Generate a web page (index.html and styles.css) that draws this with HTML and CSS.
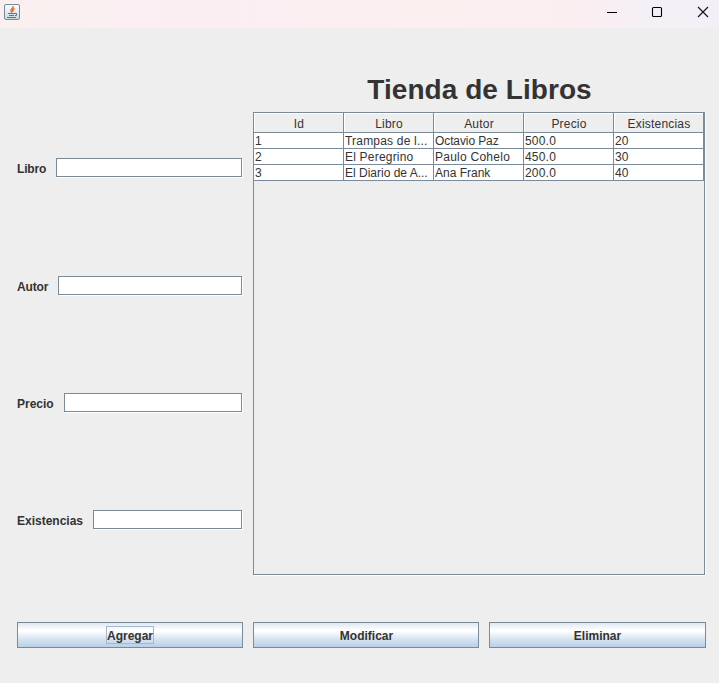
FILE: index.html
```html
<!DOCTYPE html>
<html lang="es">
<head>
<meta charset="utf-8">
<title>Tienda de Libros</title>
<link rel="stylesheet" href="styles.css">
</head>
<body>
<header class="titlebar">
  <svg class="app-icon" width="16" height="16" viewBox="0 0 16 16">
    <defs><linearGradient id="g" x1="0" y1="0" x2="0" y2="1"><stop offset="0" stop-color="#fff"/><stop offset="1" stop-color="#c9d8e2"/></linearGradient></defs>
    <rect x=".5" y=".5" width="15" height="15" rx="1.500" fill="url(#g)" stroke="#6f8ca3"/>
    <path d="M9.200 2C10 4 6 5 7 7l1 1.500M10.500 4.500C8 5.500 8.500 6.500 8.800 8" fill="none" stroke="#ee6f15" stroke-width="1.400"/>
    <path d="M4 9.500h7M5 11.500h5M11 9.500h1.500v2H11M3 13.500h9" fill="none" stroke="#4d7896"/>
  </svg>
  <div class="controls">
    <svg width="10" height="10" viewBox="0 0 10 10"><path d="M0 5.500h10" stroke="#000"/></svg>
    <svg width="10" height="10" viewBox="0 0 10 10"><rect x=".5" y=".5" width="9" height="9" rx="1" fill="none" stroke="#000" stroke-width="1.100"/></svg>
    <svg width="10" height="10" viewBox="0 0 10 10"><path d="M0 0l10 10M10 0L0 10" stroke="#111" stroke-width="1.100"/></svg>
  </div>
</header>
<main class="content">
  <form class="form">
    <div class="field"><label class="label libro" for="libro">Libro</label><input id="libro" class="input"></div>
    <div class="field"><label class="label autor" for="autor">Autor</label><input id="autor" class="input"></div>
    <div class="field"><label class="label precio" for="precio">Precio</label><input id="precio" class="input"></div>
    <div class="field"><label class="label existencias" for="existencias">Existencias</label><input id="existencias" class="input"></div>
  </form>
  <section class="catalog">
    <h1 class="title">Tienda de Libros</h1>
    <div class="scroll">
      <table class="table">
        <thead><tr><th>Id</th><th>Libro</th><th>Autor</th><th>Precio</th><th>Existencias</th></tr></thead>
        <tbody>
          <tr><td>1</td><td>Trampas de l...</td><td class="tight">Octavio Paz</td><td>500.0</td><td>20</td></tr>
          <tr><td>2</td><td>El Peregrino</td><td class="loose">Paulo Cohelo</td><td>450.0</td><td>30</td></tr>
          <tr><td>3</td><td class="normal">El Diario de A...</td><td class="normal">Ana Frank</td><td>200.0</td><td>40</td></tr>
        </tbody>
      </table>
    </div>
  </section>
</main>
<footer class="actions">
  <button class="button"><span class="focus">Agregar</span></button>
  <button class="button">Modificar</button>
  <button class="button">Eliminar</button>
</footer>
</body>
</html>
```
FILE: styles.css
```css
* { box-sizing: border-box; }
body {
  margin: 0;
  height: 683px;
  overflow: hidden;
  background: #eee;
  color: #333;
  font: 12px/15px "Liberation Sans", Arial, sans-serif;
}
.titlebar {
  height: 28px;
  padding: 4px 11px 0 4px;
  display: flex;
  justify-content: space-between;
  background: linear-gradient(90deg, #fbf0ee, #faeef4 26%, #fbefef 60%, #fbeef2 82%, #f4f0f6 90%, #f2f0f6);
}
.controls { display: flex; gap: 36px; padding-top: 3px; }
.controls svg { overflow: visible; }
.controls svg:first-child { margin-right: -1px; }
.content {
  display: grid;
  grid-template-columns: 226px 452px;
  gap: 10px;
  padding-left: 17px;
  height: 547px;
}
.form { padding-top: 130px; }
.field { display: flex; height: 19px; margin-bottom: 98px; }
.field:first-child { margin-bottom: 99px; }
.label {
  flex: none;
  padding-top: 4px;
  font-weight: bold;
}
.libro { width: 39px; letter-spacing: -.15px; }
.autor { width: 41px; letter-spacing: -.15px; }
.precio { width: 47px; }
.existencias { width: 76px; }
.input {
  flex: 1;
  min-width: 0;
  height: 19px;
  margin: 0 1px 0 0;
  padding: 0 2px;
  border: 1px solid #7a8a99;
  border-radius: 0;
  outline: 0;
  background: #fff;
  box-shadow: 1px 1px #fff;
  font: inherit;
}
.title {
  height: 84px;
  margin: 0;
  padding: 45px 0 0 1px;
  text-align: center;
  font-size: 28px;
  line-height: 33px;
  letter-spacing: .06px;
}
.scroll {
  height: 463px;
  border: 1px solid #7a8a99;
  box-shadow: 1px 1px #fff;
}
.table {
  width: 450px;
  table-layout: fixed;
  border-collapse: separate;
  border-spacing: 0;
  letter-spacing: .2px;
}
.table th {
  height: 20px;
  padding: 3px 0 0 1px;
  border-right: 1px solid #7a8a99;
  border-bottom: 1px solid #7a8a99;
  box-shadow: inset 1px 1px #fff;
  font-weight: normal;
  line-height: 16px;
  text-align: center;
}
.table td {
  height: 16px;
  padding: 1px 0 0 1px;
  border-right: 1px solid #7a8a99;
  border-bottom: 1px solid #7a8a99;
  background: #fff;
  line-height: 14px;
  white-space: nowrap;
}
.table .tight { letter-spacing: -.1px; }
.table .normal { letter-spacing: 0; }
.table .loose { letter-spacing: .25px; }
.actions {
  display: grid;
  grid-template-columns: 226px 226px 217px;
  gap: 10px;
  padding: 47px 0 0 17px;
}
.button {
  height: 26px;
  padding: 2px 0 0;
  border: 1px solid #7a8a99;
  border-radius: 0;
  background: linear-gradient(#dde8f3 0%, #fff 30%, #fff 34%, #dce7f1 62%, #b8cfe5 100%);
  color: #333;
  font: bold 12px/15px "Liberation Sans", Arial, sans-serif;
}
.button:first-child { padding-top: 1px; }
.button:nth-child(2) { padding-left: 1px; }
.focus {
  display: block;
  width: 48px;
  height: 18px;
  margin: -1px auto 0;
  border: 1px solid #a3b8cc;
  line-height: 18px;
}
```
